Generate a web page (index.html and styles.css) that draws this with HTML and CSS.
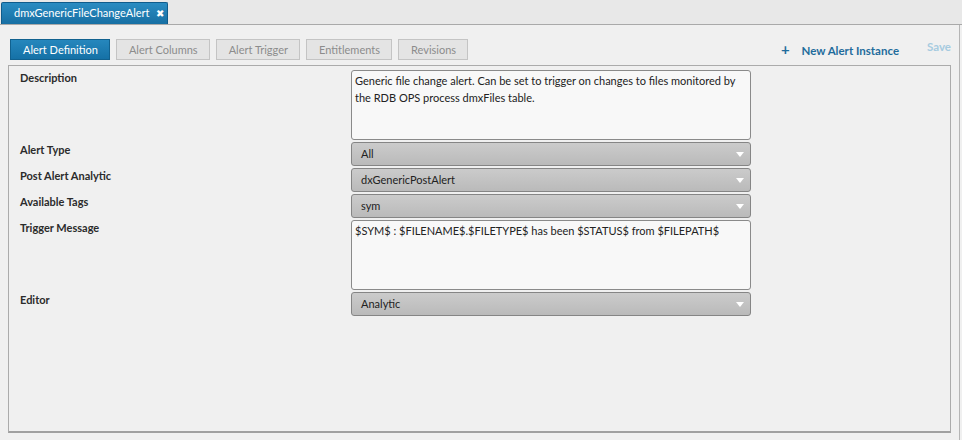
FILE: index.html
```
<!DOCTYPE html>
<html lang="en">
<head>
    <meta charset="UTF-8">
    <title>dmxGenericFileChangeAlert</title>
    <link rel="stylesheet" href="styles.css">
</head>
<body>

    <div class="tabstrip">
        <div class="tab">dmxGenericFileChangeAlert <span class="cerrar">&#10006;</span></div>
    </div>

    <div class="contenido">
        <div class="barra">
            <div class="botones">
                <span class="boton activo">Alert Definition</span>
                <span class="boton">Alert Columns</span>
                <span class="boton">Alert Trigger</span>
                <span class="boton">Entitlements</span>
                <span class="boton">Revisions</span>
            </div>
            <div class="acciones">
                <span class="nueva"><span class="mas">+</span> New Alert Instance</span>
                <span class="guardar">Save</span>
            </div>
        </div>

        <div class="panel">
            <div class="fila">
                <label>Description</label>
                <div class="area">Generic file change alert. Can be set to trigger on changes to files monitored by the RDB OPS process dmxFiles table.</div>
            </div>
            <div class="fila">
                <label>Alert Type</label>
                <div class="select">All</div>
            </div>
            <div class="fila">
                <label>Post Alert Analytic</label>
                <div class="select">dxGenericPostAlert</div>
            </div>
            <div class="fila">
                <label>Available Tags</label>
                <div class="select">sym</div>
            </div>
            <div class="fila">
                <label>Trigger Message</label>
                <div class="area">$SYM$ : $FILENAME$.$FILETYPE$ has been $STATUS$ from $FILEPATH$</div>
            </div>
            <div class="fila">
                <label>Editor</label>
                <div class="select">Analytic</div>
            </div>
        </div>
    </div>

</body>
</html>
```

FILE: styles.css
```
* {
    margin: 0;
    padding: 0;
    box-sizing: border-box;
}

body {
    background-color: #f0f0f0;
    font-family: Lato, "Open Sans", sans-serif;
    font-size: 11px;
    color: #222;
    width: 962px;
    height: 440px;
    overflow: hidden;
}

.tabstrip {
    background-color: #e8e8e8;
    height: 25px;
    border-bottom: 1px solid #a9a9a9;
    display: flex;
    align-items: flex-end;
    padding-left: 1px;
}

.tab {
    width: 167px;
    height: 22px;
    background: linear-gradient(#2a8cc2, #176fa3);
    border: 1px solid #0f5c8c;
    border-bottom: none;
    border-radius: 2px 2px 0 0;
    color: #fff;
    font-size: 11px;
    padding-left: 12px;
    line-height: 20px;
    white-space: nowrap;
}

.cerrar {
    font-size: 10px;
    margin-left: 4px;
}

.contenido {
    height: 415px;
    border-right: 1px solid #b5b5b5;
    margin-right: 2px;
    padding: 13px 8px 0 8px;
}

.barra {
    display: flex;
    justify-content: space-between;
    align-items: center;
    height: 22px;
}

.botones {
    display: flex;
    gap: 6px;
    padding-left: 2px;
}

.boton {
    height: 21px;
    line-height: 19px;
    padding: 0 11px 0 12px;
    border: 1px solid #c4c4c4;
    background-color: #e4e4e4;
    color: #8c8c8c;
    font-size: 11px;
}

.boton.activo {
    background: linear-gradient(#2687bd, #1571a6);
    border-color: #11618f;
    color: #fff;
}

.acciones {
    display: flex;
    gap: 28px;
    font-weight: bold;
    font-size: 11.5px;
}

.nueva {
    color: #1f6c9c;
}

.mas {
    font-size: 15px;
    margin-right: 9px;
}

.guardar {
    color: #a6cbe0;
}

.panel {
    margin-top: 5px;
    height: 368px;
    border: 1px solid #ababab;
    border-bottom: 2px solid #a0a0a0;
    padding: 4px 0 0 11px;
}

.fila {
    display: flex;
    margin-bottom: 2px;
}

.fila label {
    width: 331px;
    font-weight: bold;
    color: #2b2b2b;
    line-height: 15px;
}

.area {
    width: 400px;
    height: 70px;
    background-color: #f8f8f8;
    border: 1px solid #8a8a8a;
    border-radius: 3px;
    padding: 1px 3px;
    line-height: 17px;
}

.select {
    width: 400px;
    height: 24px;
    line-height: 22px;
    background: linear-gradient(#cbcbcb, #bababa);
    border: 1px solid #858585;
    border-radius: 3px;
    padding-left: 9px;
    position: relative;
}

.select::after {
    content: "";
    position: absolute;
    right: 6px;
    top: 9px;
    border-left: 4px solid transparent;
    border-right: 4px solid transparent;
    border-top: 5px solid #fff;
}
```
